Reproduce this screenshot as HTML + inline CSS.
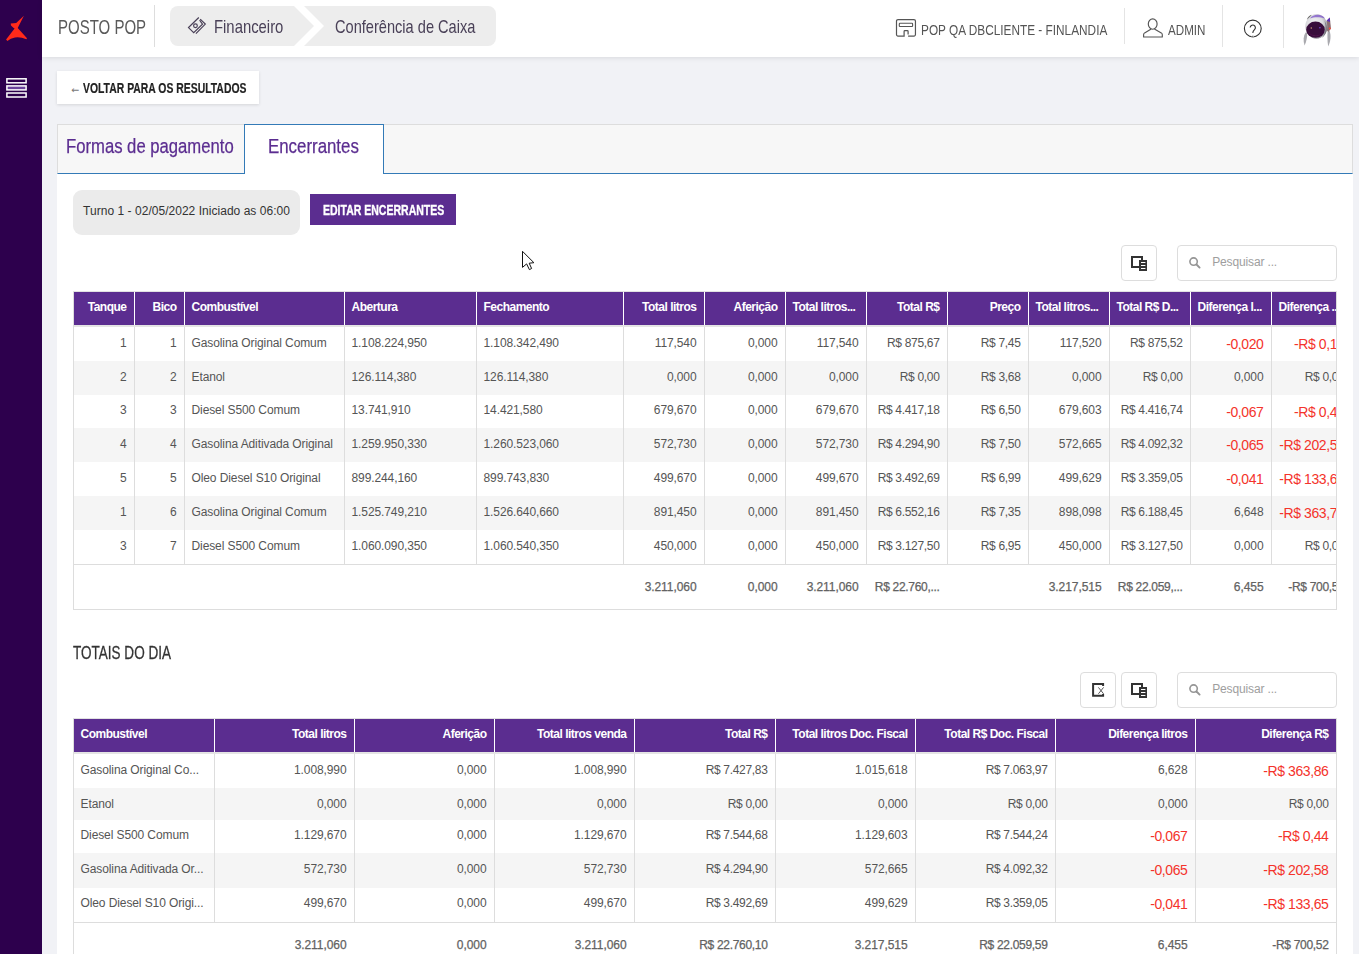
<!DOCTYPE html>
<html lang="pt-BR"><head><meta charset="utf-8"><title>Conferência de Caixa</title>
<style>
*{box-sizing:border-box;margin:0;padding:0}
html,body{width:1359px;height:954px;overflow:hidden}
body{background:#f1f2f6;font-family:"Liberation Sans",sans-serif;position:relative;color:#555}
.t{position:absolute;white-space:nowrap;line-height:1;display:block}
.abs{position:absolute}
#side{left:0;top:0;width:42px;height:954px;background:#2d004d}
#hdr{left:42px;top:0;width:1317px;height:57px;background:#fff;box-shadow:0 1px 5px rgba(0,0,0,.10)}
.vd{position:absolute;width:1px;background:#e4e4e4}
#back{left:57px;top:71px;width:202px;height:33px;background:#fff;box-shadow:0 1px 3px rgba(0,0,0,.12)}
#tabs{left:57px;top:124px;width:1296px;height:50px;background:#f7f7f7;border:1px solid #ddd;border-bottom:1px solid #337ab7}
#tabact{left:244px;top:124px;width:140px;height:50px;background:#fff;border:1px solid #337ab7;border-bottom:none}
#panel{left:57px;top:174px;width:1296px;height:780px;background:#fff}
#pill{left:73px;top:190px;width:227px;height:45px;background:#ebebeb;border-radius:9px}
#btn{left:310px;top:194px;width:146px;height:31px;background:#5b2d90}
.ib{position:absolute;width:36px;height:36px;border:1px solid #ddd;border-radius:4px;background:#fff}
.sb{position:absolute;width:160px;height:36px;border:1px solid #ddd;border-radius:4px;background:#fff}
.grid{position:absolute;left:73px;width:1264px;overflow:hidden;border-left:1px solid #ddd;border-right:1px solid #ddd}
.hr{position:absolute;left:0;top:0;height:32.75px;background:#5b2d90;width:1400px}
.row{position:absolute;left:0;width:1400px}
.row.alt{background:#f5f5f5}
.c{position:absolute;top:0;height:100%;border-left:1px solid #ddd;padding:0 7.5px 0 6.5px;font-size:12px;white-space:nowrap;overflow:hidden;color:#555;letter-spacing:-0.1px}
.hr .c{border-left:1px solid #fff;color:#fff;font-weight:700;letter-spacing:-0.5px}
.c.first{border-left:none}
.c.r{text-align:right}
.c.red{color:#f4332b;font-size:14px;letter-spacing:-0.4px}
.c.rs{letter-spacing:-0.32px}
.c.l{text-align:left}
.ft .c{border-left:none;color:#626262;-webkit-text-stroke:0.25px #626262;letter-spacing:-0.07px}
.ft .c.rs{letter-spacing:-0.31px}
</style></head><body>

<div id="side" class="abs"></div>
<svg class="abs" style="left:0;top:0" width="42" height="110" viewBox="0 0 42 110">
<path d="M23.9,15.8 L16.2,22.9 L10.7,23.6 L11,25.4 L13.4,27.8 L14.6,28.6 L6.1,39.6 L7.4,41.1 Q10.5,38.3 15,37.4 Q20.5,36.6 26.4,39.2 L27,38.2 L17.7,28.1 Z" fill="#ff2a1a"/>
<rect x="6.9" y="78.8" width="19.2" height="4" fill="none" stroke="#fff" stroke-width="1.5"/>
<rect x="6.9" y="85.9" width="19.2" height="4" fill="#6a4199" stroke="#fff" stroke-width="1.5"/>
<rect x="6.9" y="93" width="19.2" height="4" fill="none" stroke="#fff" stroke-width="1.5"/>
</svg>
<div id="hdr" class="abs"></div>
<span class="t " style="top:16.42px;font-size:21px;left:58.20px;transform:scaleX(0.714);transform-origin:0 0;color:#5a5a5a;">POSTO POP</span>
<div class="vd" style="left:154px;top:5px;height:42px;background:#ddd"></div>
<svg class="abs" style="left:170px;top:6px" width="326" height="40" viewBox="0 0 326 40">
<path d="M8,0 H124 L144,20 L124,40 H8 A8,8 0 0 1 0,32 V8 A8,8 0 0 1 8,0 Z" fill="#ededed"/>
<path d="M134,0 H318 A8,8 0 0 1 326,8 V32 A8,8 0 0 1 318,40 H134 L154,20 Z" fill="#ededed"/>
<g fill="none" stroke="#4a4158" stroke-width="1.2" stroke-linejoin="miter">
<path d="M28.8,11.5 L18.5,21.6 L23.7,26.7 L32.5,18.2 L29.6,14.2"/>
<circle cx="25.45" cy="19.7" r="1.85"/>
<path d="M30.2,13.1 L35.3,18.1 L25.9,27.6"/>
</g>
</svg>
<span class="t " style="top:18.14px;font-size:18.5px;left:214.30px;transform:scaleX(0.803);transform-origin:0 0;color:#4a4158;">Financeiro</span>
<span class="t " style="top:18.14px;font-size:18.5px;left:334.80px;transform:scaleX(0.789);transform-origin:0 0;color:#4a4158;">Conferência de Caixa</span>
<svg class="abs" style="left:894px;top:18px" width="24" height="20" viewBox="0 0 24 20">
<path d="M14.1,18.1 H19.95 A1.5,1.5 0 0 0 21.45,16.6 V3.1 A1.5,1.5 0 0 0 19.95,1.6 H4 A1.5,1.5 0 0 0 2.5,3.1 V16.6 A1.5,1.5 0 0 0 4,18.1 H10.1 V13.4 Q10.1,12.6 10.9,12.6 H13.3 Q14.1,12.6 14.1,13.4 V16.4" fill="none" stroke="#555" stroke-width="1.2"/>
<rect x="5.3" y="5.3" width="13.3" height="3.2" rx="0.6" fill="none" stroke="#555" stroke-width="1.1"/>
</svg>
<span class="t " style="top:21.76px;font-size:15.4px;left:920.80px;transform:scaleX(0.768);transform-origin:0 0;color:#555;">POP QA DBCLIENTE - FINLANDIA</span>
<div class="vd" style="left:1124px;top:8px;height:36px"></div>
<svg class="abs" style="left:1141px;top:16px" width="24" height="23" viewBox="0 0 24 23">
<ellipse cx="11.7" cy="8" rx="4.4" ry="5.2" fill="none" stroke="#555" stroke-width="1.15"/>
<path d="M10.2,12.9 L3.6,16.9 Q2.6,17.6 2.6,18.8 V21 H21.3 V18.8 Q21.3,17.6 20.3,16.9 L13.4,12.9" fill="none" stroke="#555" stroke-width="1.15" stroke-linejoin="round"/>
</svg>
<span class="t " style="top:21.76px;font-size:15.4px;left:1168.10px;transform:scaleX(0.755);transform-origin:0 0;color:#555;">ADMIN</span>
<div class="vd" style="left:1222px;top:5px;height:42px"></div>
<svg class="abs" style="left:1242px;top:18px" width="22" height="22" viewBox="0 0 22 22">
<circle cx="10.8" cy="10.5" r="8.4" fill="none" stroke="#333" stroke-width="1.1"/>
<path d="M8.2,9.6 a2.6,2.6 0 1 1 4.3,2 c-1.2,1 -1.7,1.5 -1.7,3.4" fill="none" stroke="#333" stroke-width="1.1"/>
<circle cx="10.8" cy="18.4" r="0.9" fill="#333" stroke="#fff" stroke-width="0.6"/>
</svg>
<div class="vd" style="left:1283px;top:5px;height:43px"></div>
<svg class="abs" style="left:1298px;top:10px" width="40" height="40" viewBox="0 0 40 40">
<defs><filter id="bl" x="-20%" y="-20%" width="140%" height="140%"><feGaussianBlur stdDeviation="0.6"/></filter>
<radialGradient id="hg" cx="0.42" cy="0.38" r="0.66"><stop offset="0" stop-color="#f4f4f6"/><stop offset="0.55" stop-color="#dcdce0"/><stop offset="1" stop-color="#8a8a92"/></radialGradient></defs>
<g filter="url(#bl)">
<path d="M7.6,22.5 C5.3,26 5,31 6.6,35.4 C8.4,31.5 9.4,27 9.2,23 Z" fill="#a9a9ae"/>
<path d="M31.4,20.5 C33.4,25 32.6,31.5 30.2,36.4 C29.2,31 29.4,25.5 29.6,21.5 Z" fill="#a9a9ae"/>
<path d="M28.4,11 L31.8,7.6 L33,18.6 L30.4,22 L28.4,20 Z" fill="#8b6f72"/>
<path d="M28.6,10.8 L31.8,7.4 L32.1,12 Z" fill="#5b2dc0"/>
<circle cx="31.8" cy="18.4" r="1" fill="#ff4a3a"/>
<ellipse cx="18.4" cy="16.4" rx="11" ry="12.3" fill="url(#hg)"/>
<path d="M26.5,11 C30.5,16 29.5,24 24,28 C28,23 28.4,16 26.5,11 Z" fill="#77777f"/>
<path d="M12,8.4 C15,4.2 23.6,3 27,8.6 C22,6.6 16,6.8 12,8.4 Z" fill="#7a52c8" opacity="0.75"/>
<path d="M8.8,9.8 C9.8,6.8 12,5.2 13.8,4.8 C12,6.8 10.4,8.6 8.8,9.8 Z" fill="#666"/>
<ellipse cx="17.5" cy="19.7" rx="9.3" ry="8.1" fill="#380a3a"/>
<path d="M10.6,22 C13,25.4 19,26.6 23.8,23.4 C20,27.8 12.6,27.2 10.6,22 Z" fill="#4d144c"/>
<circle cx="13.3" cy="18" r="0.8" fill="#c8a070"/><circle cx="21.9" cy="17.8" r="0.8" fill="#7a52e0"/>
</g></svg>
<div id="back" class="abs"></div>
<span class="t " style="top:85.16px;font-size:9.5px;left:71.60px;color:#777;font-family:'DejaVu Sans',sans-serif;">←</span>
<span class="t " style="top:80.80px;font-size:14.3px;left:82.60px;transform:scaleX(0.728);transform-origin:0 0;color:#222;font-weight:700;-webkit-text-stroke:0.2px #222;">VOLTAR PARA OS RESULTADOS</span>
<div id="panel" class="abs"></div>
<div id="tabs" class="abs"></div><div id="tabact" class="abs"></div>
<span class="t " style="top:135.55px;font-size:20.5px;left:66.40px;transform:scaleX(0.813);transform-origin:0 0;color:#5b2d90;-webkit-text-stroke:0.25px #5b2d90;">Formas de pagamento</span>
<span class="t " style="top:135.55px;font-size:20.5px;left:268.00px;transform:scaleX(0.822);transform-origin:0 0;color:#5b2d90;-webkit-text-stroke:0.25px #5b2d90;">Encerrantes</span>
<div id="pill" class="abs"></div>
<span class="t " style="top:205.04px;font-size:12px;left:83.10px;color:#333;letter-spacing:0.03px;">Turno 1 - 02/05/2022 Iniciado as 06:00</span>
<div id="btn" class="abs"></div>
<span class="t " style="top:203.20px;font-size:14.3px;left:322.80px;transform:scaleX(0.735);transform-origin:0 0;color:#fff;font-weight:700;-webkit-text-stroke:0.35px #fff;">EDITAR ENCERRANTES</span>
<div class="ib" style="left:1121px;top:245px"><svg class="abs" style="left:0;top:0" width="34" height="34" viewBox="0 0 34 34">
<rect x="10" y="11" width="10" height="10" fill="none" stroke="#333" stroke-width="2"/>
<rect x="17" y="14" width="8" height="11" fill="#333"/>
<path d="M19,16.5 H23.4 M19,19.5 H23.4 M19,22.5 H23.4" stroke="#fff" stroke-width="1.1"/>
</svg></div>
<div class="sb" style="left:1177px;top:245px"><svg class="abs" style="left:9px;top:8.6px" width="16" height="16" viewBox="0 0 16 16">
<circle cx="6.6" cy="6.6" r="3.7" fill="none" stroke="#959595" stroke-width="1.6"/><path d="M9.5,9.5 L12.6,12.6" stroke="#959595" stroke-width="1.9" stroke-linecap="round"/></svg></div>
<span class="t " style="top:256.04px;font-size:12px;left:1212.20px;color:#9e9e9e;letter-spacing:-0.14px;">Pesquisar ...</span>
<div class="ib" style="left:1080px;top:672px"><svg class="abs" style="left:0;top:0" width="34" height="34" viewBox="0 0 34 34">
<path d="M22.1,12.9 V11.1 H12.1 V22.8 H22.1 V21" fill="none" stroke="#333" stroke-width="2"/>
<path d="M17.4,14.4 L22.6,20.8 M22.6,14.4 L17.4,20.8" stroke="#444" stroke-width="0.9"/></svg></div>
<div class="ib" style="left:1121px;top:672px"><svg class="abs" style="left:0;top:0" width="34" height="34" viewBox="0 0 34 34">
<rect x="10" y="11" width="10" height="10" fill="none" stroke="#333" stroke-width="2"/>
<rect x="17" y="14" width="8" height="11" fill="#333"/>
<path d="M19,16.5 H23.4 M19,19.5 H23.4 M19,22.5 H23.4" stroke="#fff" stroke-width="1.1"/>
</svg></div>
<div class="sb" style="left:1177px;top:672px"><svg class="abs" style="left:9px;top:8.6px" width="16" height="16" viewBox="0 0 16 16">
<circle cx="6.6" cy="6.6" r="3.7" fill="none" stroke="#959595" stroke-width="1.6"/><path d="M9.5,9.5 L12.6,12.6" stroke="#959595" stroke-width="1.9" stroke-linecap="round"/></svg></div>
<span class="t " style="top:683.04px;font-size:12px;left:1212.20px;color:#9e9e9e;letter-spacing:-0.14px;">Pesquisar ...</span>
<div class="grid" style="top:291px;height:319px;border-top:1px solid #e2e2e2;border-bottom:1px solid #ddd"><div class="hr"><div class="c r first" style="left:0px;width:60px;line-height:30px">Tanque</div><div class="c r" style="left:60px;width:50px;line-height:30px">Bico</div><div class="c " style="left:110px;width:160px;line-height:30px">Combustível</div><div class="c " style="left:270px;width:132px;line-height:30px">Abertura</div><div class="c " style="left:402px;width:147px;line-height:30px">Fechamento</div><div class="c r" style="left:549px;width:81px;line-height:30px">Total litros</div><div class="c r" style="left:630px;width:81px;line-height:30px">Aferição</div><div class="c l" style="left:711px;width:81px;line-height:30px">Total litros...</div><div class="c r" style="left:792px;width:81px;line-height:30px">Total R$</div><div class="c r" style="left:873px;width:81px;line-height:30px">Preço</div><div class="c l" style="left:954px;width:81px;line-height:30px">Total litros...</div><div class="c l" style="left:1035px;width:81px;line-height:30px">Total R$ D...</div><div class="c l" style="left:1116px;width:81px;line-height:30px">Diferença l...</div><div class="c l" style="left:1197px;width:81px;line-height:30px">Diferença ...</div></div><div class="row" style="top:32.75px;height:2px;background:#e4e4e4"></div><div class="row" style="top:34.75px;height:33.9px"><div class="c r first" style="left:0px;width:60px;line-height:32.9px">1</div><div class="c r" style="left:60px;width:50px;line-height:32.9px">1</div><div class="c " style="left:110px;width:160px;line-height:32.9px">Gasolina Original Comum</div><div class="c " style="left:270px;width:132px;line-height:32.9px">1.108.224,950</div><div class="c " style="left:402px;width:147px;line-height:32.9px">1.108.342,490</div><div class="c r" style="left:549px;width:81px;line-height:32.9px">117,540</div><div class="c r" style="left:630px;width:81px;line-height:32.9px">0,000</div><div class="c r" style="left:711px;width:81px;line-height:32.9px">117,540</div><div class="c r rs" style="left:792px;width:81px;line-height:32.9px">R$ 875,67</div><div class="c r rs" style="left:873px;width:81px;line-height:32.9px">R$ 7,45</div><div class="c r" style="left:954px;width:81px;line-height:32.9px">117,520</div><div class="c r rs" style="left:1035px;width:81px;line-height:32.9px">R$ 875,52</div><div class="c r red" style="left:1116px;width:81px;line-height:35.5px">-0,020</div><div class="c r red" style="left:1197px;width:81px;line-height:35.5px">-R$ 0,15</div></div><div class="row alt" style="top:68.65px;height:33.9px"><div class="c r first" style="left:0px;width:60px;line-height:32.9px">2</div><div class="c r" style="left:60px;width:50px;line-height:32.9px">2</div><div class="c " style="left:110px;width:160px;line-height:32.9px">Etanol</div><div class="c " style="left:270px;width:132px;line-height:32.9px">126.114,380</div><div class="c " style="left:402px;width:147px;line-height:32.9px">126.114,380</div><div class="c r" style="left:549px;width:81px;line-height:32.9px">0,000</div><div class="c r" style="left:630px;width:81px;line-height:32.9px">0,000</div><div class="c r" style="left:711px;width:81px;line-height:32.9px">0,000</div><div class="c r rs" style="left:792px;width:81px;line-height:32.9px">R$ 0,00</div><div class="c r rs" style="left:873px;width:81px;line-height:32.9px">R$ 3,68</div><div class="c r" style="left:954px;width:81px;line-height:32.9px">0,000</div><div class="c r rs" style="left:1035px;width:81px;line-height:32.9px">R$ 0,00</div><div class="c r" style="left:1116px;width:81px;line-height:32.9px">0,000</div><div class="c r rs" style="left:1197px;width:81px;line-height:32.9px">R$ 0,00</div></div><div class="row" style="top:102.55000000000001px;height:33.9px"><div class="c r first" style="left:0px;width:60px;line-height:31.7px">3</div><div class="c r" style="left:60px;width:50px;line-height:31.7px">3</div><div class="c " style="left:110px;width:160px;line-height:31.7px">Diesel S500 Comum</div><div class="c " style="left:270px;width:132px;line-height:31.7px">13.741,910</div><div class="c " style="left:402px;width:147px;line-height:31.7px">14.421,580</div><div class="c r" style="left:549px;width:81px;line-height:31.7px">679,670</div><div class="c r" style="left:630px;width:81px;line-height:31.7px">0,000</div><div class="c r" style="left:711px;width:81px;line-height:31.7px">679,670</div><div class="c r rs" style="left:792px;width:81px;line-height:31.7px">R$ 4.417,18</div><div class="c r rs" style="left:873px;width:81px;line-height:31.7px">R$ 6,50</div><div class="c r" style="left:954px;width:81px;line-height:31.7px">679,603</div><div class="c r rs" style="left:1035px;width:81px;line-height:31.7px">R$ 4.416,74</div><div class="c r red" style="left:1116px;width:81px;line-height:34.3px">-0,067</div><div class="c r red" style="left:1197px;width:81px;line-height:34.3px">-R$ 0,44</div></div><div class="row alt" style="top:136.45000000000002px;height:33.9px"><div class="c r first" style="left:0px;width:60px;line-height:32.9px">4</div><div class="c r" style="left:60px;width:50px;line-height:32.9px">4</div><div class="c " style="left:110px;width:160px;line-height:32.9px">Gasolina Aditivada Original</div><div class="c " style="left:270px;width:132px;line-height:32.9px">1.259.950,330</div><div class="c " style="left:402px;width:147px;line-height:32.9px">1.260.523,060</div><div class="c r" style="left:549px;width:81px;line-height:32.9px">572,730</div><div class="c r" style="left:630px;width:81px;line-height:32.9px">0,000</div><div class="c r" style="left:711px;width:81px;line-height:32.9px">572,730</div><div class="c r rs" style="left:792px;width:81px;line-height:32.9px">R$ 4.294,90</div><div class="c r rs" style="left:873px;width:81px;line-height:32.9px">R$ 7,50</div><div class="c r" style="left:954px;width:81px;line-height:32.9px">572,665</div><div class="c r rs" style="left:1035px;width:81px;line-height:32.9px">R$ 4.092,32</div><div class="c r red" style="left:1116px;width:81px;line-height:35.5px">-0,065</div><div class="c r red" style="left:1197px;width:81px;line-height:35.5px">-R$ 202,58</div></div><div class="row" style="top:170.35000000000002px;height:33.9px"><div class="c r first" style="left:0px;width:60px;line-height:32.9px">5</div><div class="c r" style="left:60px;width:50px;line-height:32.9px">5</div><div class="c " style="left:110px;width:160px;line-height:32.9px">Oleo Diesel S10 Original</div><div class="c " style="left:270px;width:132px;line-height:32.9px">899.244,160</div><div class="c " style="left:402px;width:147px;line-height:32.9px">899.743,830</div><div class="c r" style="left:549px;width:81px;line-height:32.9px">499,670</div><div class="c r" style="left:630px;width:81px;line-height:32.9px">0,000</div><div class="c r" style="left:711px;width:81px;line-height:32.9px">499,670</div><div class="c r rs" style="left:792px;width:81px;line-height:32.9px">R$ 3.492,69</div><div class="c r rs" style="left:873px;width:81px;line-height:32.9px">R$ 6,99</div><div class="c r" style="left:954px;width:81px;line-height:32.9px">499,629</div><div class="c r rs" style="left:1035px;width:81px;line-height:32.9px">R$ 3.359,05</div><div class="c r red" style="left:1116px;width:81px;line-height:35.5px">-0,041</div><div class="c r red" style="left:1197px;width:81px;line-height:35.5px">-R$ 133,64</div></div><div class="row alt" style="top:204.25000000000003px;height:33.9px"><div class="c r first" style="left:0px;width:60px;line-height:32.9px">1</div><div class="c r" style="left:60px;width:50px;line-height:32.9px">6</div><div class="c " style="left:110px;width:160px;line-height:32.9px">Gasolina Original Comum</div><div class="c " style="left:270px;width:132px;line-height:32.9px">1.525.749,210</div><div class="c " style="left:402px;width:147px;line-height:32.9px">1.526.640,660</div><div class="c r" style="left:549px;width:81px;line-height:32.9px">891,450</div><div class="c r" style="left:630px;width:81px;line-height:32.9px">0,000</div><div class="c r" style="left:711px;width:81px;line-height:32.9px">891,450</div><div class="c r rs" style="left:792px;width:81px;line-height:32.9px">R$ 6.552,16</div><div class="c r rs" style="left:873px;width:81px;line-height:32.9px">R$ 7,35</div><div class="c r" style="left:954px;width:81px;line-height:32.9px">898,098</div><div class="c r rs" style="left:1035px;width:81px;line-height:32.9px">R$ 6.188,45</div><div class="c r" style="left:1116px;width:81px;line-height:32.9px">6,648</div><div class="c r red" style="left:1197px;width:81px;line-height:35.5px">-R$ 363,71</div></div><div class="row" style="top:238.15000000000003px;height:33.9px"><div class="c r first" style="left:0px;width:60px;line-height:32.9px">3</div><div class="c r" style="left:60px;width:50px;line-height:32.9px">7</div><div class="c " style="left:110px;width:160px;line-height:32.9px">Diesel S500 Comum</div><div class="c " style="left:270px;width:132px;line-height:32.9px">1.060.090,350</div><div class="c " style="left:402px;width:147px;line-height:32.9px">1.060.540,350</div><div class="c r" style="left:549px;width:81px;line-height:32.9px">450,000</div><div class="c r" style="left:630px;width:81px;line-height:32.9px">0,000</div><div class="c r" style="left:711px;width:81px;line-height:32.9px">450,000</div><div class="c r rs" style="left:792px;width:81px;line-height:32.9px">R$ 3.127,50</div><div class="c r rs" style="left:873px;width:81px;line-height:32.9px">R$ 6,95</div><div class="c r" style="left:954px;width:81px;line-height:32.9px">450,000</div><div class="c r rs" style="left:1035px;width:81px;line-height:32.9px">R$ 3.127,50</div><div class="c r" style="left:1116px;width:81px;line-height:32.9px">0,000</div><div class="c r rs" style="left:1197px;width:81px;line-height:32.9px">R$ 0,00</div></div><div class="row ft" style="top:272.05px;height:46.94999999999999px;border-top:1px solid #ddd"><div class="c r first" style="left:549px;width:81px;line-height:45px">3.211,060</div><div class="c r first" style="left:630px;width:81px;line-height:45px">0,000</div><div class="c r first" style="left:711px;width:81px;line-height:45px">3.211,060</div><div class="c r rs first" style="left:792px;width:81px;line-height:45px">R$ 22.760,...</div><div class="c r first" style="left:954px;width:81px;line-height:45px">3.217,515</div><div class="c r rs first" style="left:1035px;width:81px;line-height:45px">R$ 22.059,...</div><div class="c r first" style="left:1116px;width:81px;line-height:45px">6,455</div><div class="c r rs first" style="left:1197px;width:81px;line-height:45px">-R$ 700,52</div></div></div>
<span class="t " style="top:643.12px;font-size:19px;left:73.10px;transform:scaleX(0.712);transform-origin:0 0;color:#333;-webkit-text-stroke:0.3px #333;">TOTAIS DO DIA</span>
<div class="grid" style="top:718px;height:260px;border-top:1px solid #e2e2e2;border-bottom:1px solid #ddd"><div class="hr"><div class="c  first" style="left:0px;width:140px;line-height:30px">Combustível</div><div class="c r" style="left:140px;width:140px;line-height:30px">Total litros</div><div class="c r" style="left:280px;width:140px;line-height:30px">Aferição</div><div class="c r" style="left:420px;width:140px;line-height:30px">Total litros venda</div><div class="c r" style="left:560px;width:141px;line-height:30px">Total R$</div><div class="c r" style="left:701px;width:140px;line-height:30px">Total litros Doc. Fiscal</div><div class="c r" style="left:841px;width:140px;line-height:30px">Total R$ Doc. Fiscal</div><div class="c r" style="left:981px;width:140px;line-height:30px">Diferença litros</div><div class="c r" style="left:1121px;width:141px;line-height:30px">Diferença R$</div></div><div class="row" style="top:32.75px;height:2px;background:#e4e4e4"></div><div class="row" style="top:34.75px;height:34.3px"><div class="c  first" style="left:0px;width:140px;line-height:33.3px">Gasolina Original Co...</div><div class="c r" style="left:140px;width:140px;line-height:33.3px">1.008,990</div><div class="c r" style="left:280px;width:140px;line-height:33.3px">0,000</div><div class="c r" style="left:420px;width:140px;line-height:33.3px">1.008,990</div><div class="c r rs" style="left:560px;width:141px;line-height:33.3px">R$ 7.427,83</div><div class="c r" style="left:701px;width:140px;line-height:33.3px">1.015,618</div><div class="c r rs" style="left:841px;width:140px;line-height:33.3px">R$ 7.063,97</div><div class="c r" style="left:981px;width:140px;line-height:33.3px">6,628</div><div class="c r red" style="left:1121px;width:141px;line-height:35.9px">-R$ 363,86</div></div><div class="row alt" style="top:69.05px;height:31.9px"><div class="c  first" style="left:0px;width:140px;line-height:32.699999999999996px">Etanol</div><div class="c r" style="left:140px;width:140px;line-height:32.699999999999996px">0,000</div><div class="c r" style="left:280px;width:140px;line-height:32.699999999999996px">0,000</div><div class="c r" style="left:420px;width:140px;line-height:32.699999999999996px">0,000</div><div class="c r rs" style="left:560px;width:141px;line-height:32.699999999999996px">R$ 0,00</div><div class="c r" style="left:701px;width:140px;line-height:32.699999999999996px">0,000</div><div class="c r rs" style="left:841px;width:140px;line-height:32.699999999999996px">R$ 0,00</div><div class="c r" style="left:981px;width:140px;line-height:32.699999999999996px">0,000</div><div class="c r rs" style="left:1121px;width:141px;line-height:32.699999999999996px">R$ 0,00</div></div><div class="row" style="top:100.94999999999999px;height:33.5px"><div class="c  first" style="left:0px;width:140px;line-height:30.3px">Diesel S500 Comum</div><div class="c r" style="left:140px;width:140px;line-height:30.3px">1.129,670</div><div class="c r" style="left:280px;width:140px;line-height:30.3px">0,000</div><div class="c r" style="left:420px;width:140px;line-height:30.3px">1.129,670</div><div class="c r rs" style="left:560px;width:141px;line-height:30.3px">R$ 7.544,68</div><div class="c r" style="left:701px;width:140px;line-height:30.3px">1.129,603</div><div class="c r rs" style="left:841px;width:140px;line-height:30.3px">R$ 7.544,24</div><div class="c r red" style="left:981px;width:140px;line-height:32.9px">-0,067</div><div class="c r red" style="left:1121px;width:141px;line-height:32.9px">-R$ 0,44</div></div><div class="row alt" style="top:134.45px;height:34.4px"><div class="c  first" style="left:0px;width:140px;line-height:32.199999999999996px">Gasolina Aditivada Or...</div><div class="c r" style="left:140px;width:140px;line-height:32.199999999999996px">572,730</div><div class="c r" style="left:280px;width:140px;line-height:32.199999999999996px">0,000</div><div class="c r" style="left:420px;width:140px;line-height:32.199999999999996px">572,730</div><div class="c r rs" style="left:560px;width:141px;line-height:32.199999999999996px">R$ 4.294,90</div><div class="c r" style="left:701px;width:140px;line-height:32.199999999999996px">572,665</div><div class="c r rs" style="left:841px;width:140px;line-height:32.199999999999996px">R$ 4.092,32</div><div class="c r red" style="left:981px;width:140px;line-height:34.8px">-0,065</div><div class="c r red" style="left:1121px;width:141px;line-height:34.8px">-R$ 202,58</div></div><div class="row" style="top:168.85px;height:34.6px"><div class="c  first" style="left:0px;width:140px;line-height:30.0px">Oleo Diesel S10 Origi...</div><div class="c r" style="left:140px;width:140px;line-height:30.0px">499,670</div><div class="c r" style="left:280px;width:140px;line-height:30.0px">0,000</div><div class="c r" style="left:420px;width:140px;line-height:30.0px">499,670</div><div class="c r rs" style="left:560px;width:141px;line-height:30.0px">R$ 3.492,69</div><div class="c r" style="left:701px;width:140px;line-height:30.0px">499,629</div><div class="c r rs" style="left:841px;width:140px;line-height:30.0px">R$ 3.359,05</div><div class="c r red" style="left:981px;width:140px;line-height:32.6px">-0,041</div><div class="c r red" style="left:1121px;width:141px;line-height:32.6px">-R$ 133,65</div></div><div class="row ft" style="top:203.45px;height:56.55000000000001px;border-top:1px solid #ddd"><div class="c r first" style="left:140px;width:140px;line-height:45px">3.211,060</div><div class="c r first" style="left:280px;width:140px;line-height:45px">0,000</div><div class="c r first" style="left:420px;width:140px;line-height:45px">3.211,060</div><div class="c r rs first" style="left:560px;width:141px;line-height:45px">R$ 22.760,10</div><div class="c r first" style="left:701px;width:140px;line-height:45px">3.217,515</div><div class="c r rs first" style="left:841px;width:140px;line-height:45px">R$ 22.059,59</div><div class="c r first" style="left:981px;width:140px;line-height:45px">6,455</div><div class="c r rs first" style="left:1121px;width:141px;line-height:45px">-R$ 700,52</div></div></div>
<svg class="abs" style="left:518px;top:248px" width="20" height="26" viewBox="0 0 20 26">
<path d="M4.5,3.3 V19.4 L8.6,15.9 L11.4,21.6 L13.6,20.5 L11.2,15.2 L15.9,14.7 Z" fill="#fff" stroke="#111" stroke-width="1" stroke-linejoin="round"/></svg>
</body></html>
